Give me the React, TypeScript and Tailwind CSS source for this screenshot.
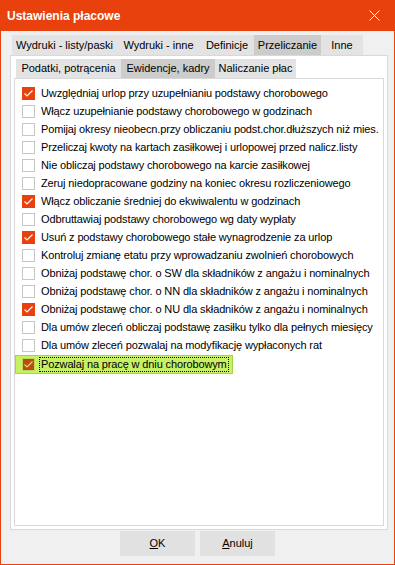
import React from 'react';

const outerTabs = [
  { label: 'Wydruki - listy/paski', w: 'w-[105px]' },
  { label: 'Wydruki - inne', w: 'w-[83px]' },
  { label: 'Definicje', w: 'w-[54px]' },
  { label: 'Przeliczanie', w: 'w-[67px]', active: true },
  { label: 'Inne', w: 'w-[42px]' },
];

const innerTabs = [
  { label: 'Podatki, potrącenia', w: 'w-[105px]' },
  { label: 'Ewidencje, kadry', w: 'w-[94px]', active: true },
  { label: 'Naliczanie płac', w: 'w-[81px]' },
];

const options: [string, boolean][] = [
  ['Uwzględniaj urlop przy uzupełnianiu podstawy chorobowego', true],
  ['Włącz uzupełnianie podstawy chorobowego w godzinach', false],
  ['Pomijaj okresy nieobecn.przy obliczaniu podst.chor.dłuższych niż mies.', false],
  ['Przeliczaj kwoty na kartach zasiłkowej i urlopowej przed nalicz.listy', false],
  ['Nie obliczaj podstawy chorobowego na karcie zasiłkowej', false],
  ['Zeruj niedopracowane godziny na koniec okresu rozliczeniowego', false],
  ['Włącz obliczanie średniej do ekwiwalentu w godzinach', true],
  ['Odbruttawiaj podstawy chorobowego wg daty wypłaty', false],
  ['Usuń z podstawy chorobowego stałe wynagrodzenie za urlop', true],
  ['Kontroluj zmianę etatu przy wprowadzaniu zwolnień chorobowych', false],
  ['Obniżaj podstawę chor. o SW dla składników z angażu i nominalnych', false],
  ['Obniżaj podstawę chor. o NN dla składników z angażu i nominalnych', false],
  ['Obniżaj podstawę chor. o NU dla składników z angażu i nominalnych', true],
  ['Dla umów zleceń obliczaj podstawę zasiłku tylko dla pełnych miesięcy', false],
  ['Dla umów zleceń pozwalaj na modyfikację wypłaconych rat', false],
];

const Check = ({ checked, focused }: { checked: boolean; focused?: boolean }) => {
  if (!checked) {
    return <div className="w-[13px] h-[13px] shrink-0 bg-white border border-[#c6c6c6]" />;
  }
  return (
    <div
      className={
        focused
          ? 'w-[13px] h-[13px] shrink-0 bg-[#c24714] border border-[#b9dc55] flex items-center justify-center'
          : 'w-[13px] h-[13px] shrink-0 bg-[#e8410e] flex items-center justify-center'
      }
    >
      <svg width="13" height="13" viewBox="0 0 13 13" className="shrink-0">
        <polyline
          points="2.5,6.5 5,9 10.5,3.5"
          fill="none"
          stroke={focused ? '#c6ef66' : '#ffffff'}
          strokeWidth="1.1"
        />
      </svg>
    </div>
  );
};

const App = () => {
  return (
    <div className="w-[395px] h-[565px] flex flex-col bg-[#f0f0f0] border border-t-0 border-[#e8410e] font-['Liberation_Sans',Arial,sans-serif] text-[11px] text-black overflow-hidden">
      <div className="h-[31px] shrink-0 bg-[#e8410e] flex items-center justify-between pl-[7px] pr-[15px] -mx-px">
        <span className="text-white text-[12px] font-bold">Ustawienia płacowe</span>
        <svg width="11" height="11" viewBox="0 0 11 11">
          <path d="M0.5 0.5 L10.5 10.5 M10.5 0.5 L0.5 10.5" stroke="#ffffff" strokeWidth="1" />
        </svg>
      </div>

      <div className="mt-[4px] ml-[11px] flex h-[20px]">
        {outerTabs.map((t) => (
          <div
            key={t.label}
            className={`${t.w} flex items-center justify-center ${t.active ? 'bg-[#cccccc]' : 'bg-[#e3e3e3]'}`}
          >
            {t.label}
          </div>
        ))}
      </div>

      <div className="ml-[9px] w-[378px] h-[475px] bg-white border border-[#d9d9d9] p-[3px] flex flex-col">
        <div className="flex h-[19px] ml-[2px]">
          {innerTabs.map((t) => (
            <div
              key={t.label}
              className={`${t.w} flex items-center justify-center ${t.active ? 'bg-[#cccccc]' : 'bg-[#e3e3e3]'}`}
            >
              {t.label}
            </div>
          ))}
        </div>
        <div className="flex-1 border border-[#d9d9d9] pt-[5px] flex flex-col tracking-[-0.13px]">
          {options.map(([label, checked]) => (
            <div key={label} className="h-[18px] flex items-center gap-[6px] pl-[7px] whitespace-nowrap">
              <Check checked={checked} />
              <span>{label}</span>
            </div>
          ))}
          <div className="mt-[1px] h-[19px] w-[218px] flex items-center gap-[4px] pl-[6px] bg-[#c8f065] border border-[#a6d447] whitespace-nowrap">
            <Check checked focused />
            <span className="border border-dotted border-black px-[1px] leading-[13px]">
              Pozwalaj na pracę w dniu chorobowym
            </span>
          </div>
        </div>
      </div>

      <div className="mt-[1px] flex justify-center gap-[5px]">
        <button className="w-[75px] h-[25px] bg-[#e1e1e1] flex items-center justify-center">
          <span>
            <span className="underline">O</span>K
          </span>
        </button>
        <button className="w-[75px] h-[25px] bg-[#e1e1e1] flex items-center justify-center">
          <span>
            <span className="underline">A</span>nuluj
          </span>
        </button>
      </div>
    </div>
  );
};

export default App;
